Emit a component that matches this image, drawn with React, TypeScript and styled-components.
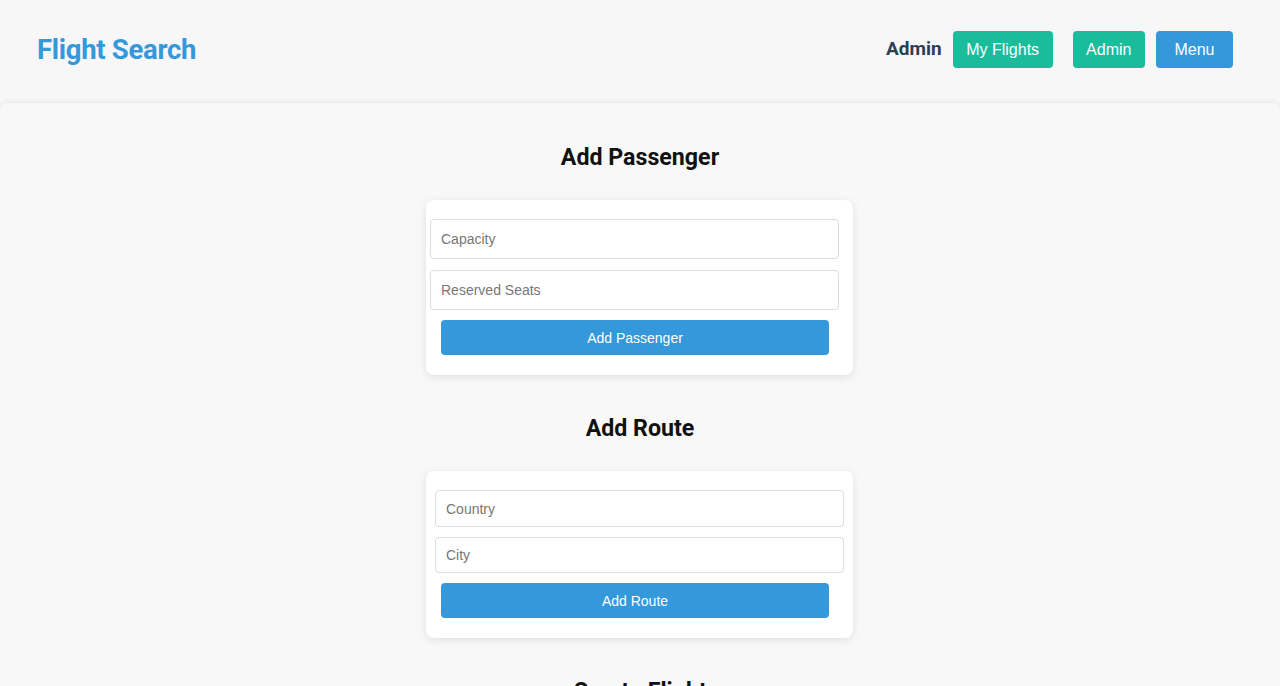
import React from 'react';
import styled, { createGlobalStyle } from 'styled-components';

const GlobalStyle = createGlobalStyle`
  html, body {
    margin: 0;
    padding: 0;
    background: #f7f7f7;
    font-family: "Liberation Sans", Arial, sans-serif;
  }
  * {
    box-sizing: border-box;
  }
`;

const Header = styled.header`
  height: 103px;
  display: flex;
  align-items: center;
  justify-content: space-between;
  padding: 0 47px 4px 37px;
  background: #f7f7f7;
`;

const Brand = styled.h1`
  margin: 0;
  font-family: Roboto, "Liberation Sans", sans-serif;
  font-size: 27.5px;
  font-weight: 700;
  color: #3498db;
  letter-spacing: -0.3px;
`;

const Nav = styled.nav`
  display: flex;
  align-items: center;
`;

const UserName = styled.span`
  font-family: Roboto, "Liberation Sans", sans-serif;
  font-size: 19px;
  font-weight: 700;
  color: #2c3e50;
  margin-right: 11px;
  margin-top: -2px;
`;

const NavButton = styled.button<{ $tone: 'green' | 'blue'; $gap?: number; $pad: number }>`
  height: 37px;
  margin-left: ${p => p.$gap ?? 0}px;
  padding: 0 ${p => p.$pad}px;
  border: none;
  border-radius: 4px;
  background: ${p => (p.$tone === 'green' ? '#1abc9c' : '#3498db')};
  color: #fff;
  font-family: "Liberation Sans", Arial, sans-serif;
  font-size: 16px;
  cursor: pointer;
`;

const Main = styled.main`
  background: #f8f8f8;
  border-radius: 8px 8px 0 0;
  box-shadow: 0 -2px 5px rgba(0, 0, 0, 0.06);
  padding: 40px 0 40px;
  display: flex;
  flex-direction: column;
  align-items: center;
`;

const SectionTitle = styled.h2`
  margin: 0 0 29px;
  font-family: Roboto, "Liberation Sans", sans-serif;
  font-size: 23.2px;
  line-height: 28px;
  font-weight: 700;
  color: #111;
`;

const Card = styled.form`
  width: 427px;
  margin: 0 1px 39px 0;
  padding: 19px 0 20px;
  background: #fff;
  border-radius: 8px;
  box-shadow: 0 2px 8px rgba(0, 0, 0, 0.1);
  display: flex;
  flex-direction: column;
`;

const Field = styled.input<{ $offset: number; $height: number; $gap: number }>`
  width: 409px;
  height: ${p => p.$height}px;
  margin: 0 0 ${p => p.$gap}px ${p => p.$offset}px;
  padding: 0 10px;
  border: 1px solid #ddd;
  border-radius: 4px;
  font-family: "Liberation Sans", Arial, sans-serif;
  font-size: 14px;
  color: #333;
  background: #fff;
  outline: none;

  &::placeholder {
    color: #777;
  }
`;

const SubmitButton = styled.button`
  width: 388px;
  height: 35px;
  margin-left: 15px;
  border: none;
  border-radius: 4px;
  background: #3498db;
  color: #fff;
  font-family: "Liberation Sans", Arial, sans-serif;
  font-size: 14px;
  cursor: pointer;
`;

const App: React.FC = () => {
  return (
    <>
      <GlobalStyle />
      <Header>
        <Brand>Flight Search</Brand>
        <Nav>
          <UserName>Admin</UserName>
          <NavButton $tone="green" $pad={13.5}>My Flights</NavButton>
          <NavButton $tone="green" $gap={20} $pad={13.5}>Admin</NavButton>
          <NavButton $tone="blue" $gap={11} $pad={18.5}>Menu</NavButton>
        </Nav>
      </Header>

      <Main>
        <SectionTitle>Add Passenger</SectionTitle>
        <Card onSubmit={e => e.preventDefault()}>
          <Field $offset={4} $height={40} $gap={11} placeholder="Capacity" />
          <Field $offset={4} $height={40} $gap={10} placeholder="Reserved Seats" />
          <SubmitButton type="submit">Add Passenger</SubmitButton>
        </Card>

        <SectionTitle>Add Route</SectionTitle>
        <Card onSubmit={e => e.preventDefault()}>
          <Field $offset={9} $height={37} $gap={10} placeholder="Country" />
          <Field $offset={9} $height={36} $gap={10} placeholder="City" />
          <SubmitButton type="submit">Add Route</SubmitButton>
        </Card>

        <SectionTitle>Create Flight</SectionTitle>
      </Main>
    </>
  );
};

export default App;
